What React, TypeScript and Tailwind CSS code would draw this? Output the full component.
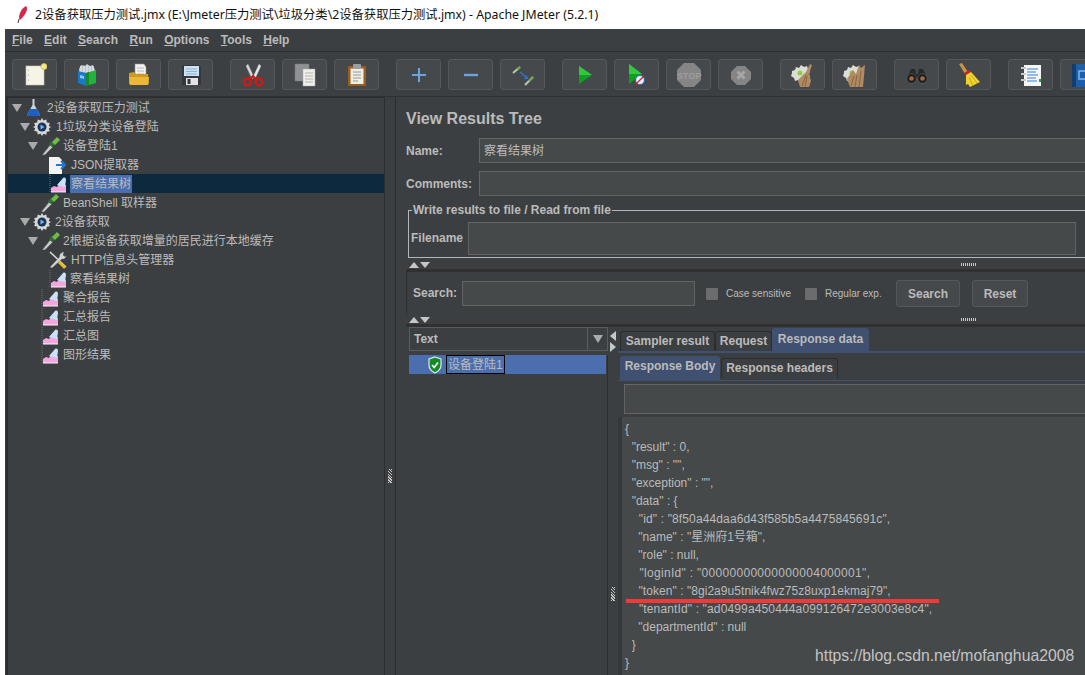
import React from "react";

const cjk = "font-['Liberation_Sans','Noto_Sans_CJK_SC',sans-serif]";

function Svg({ children, w = 24, h = 24, cls = "" }: { children: React.ReactNode; w?: number; h?: number; cls?: string }) {
  return (
    <svg width={w} height={h} viewBox={`0 0 ${w} ${h}`} className={`shrink-0 ${cls}`}>
      {children}
    </svg>
  );
}

const NewIcon = () => (
  <Svg>
    <rect x="3" y="3" width="18" height="19" fill="#f6f4e6" stroke="#c8c6b4" strokeWidth="0.6" />
    <circle cx="5.5" cy="7" r="0.6" fill="#999" />
    <circle cx="5.5" cy="12" r="0.6" fill="#999" />
    <circle cx="5.5" cy="17" r="0.6" fill="#999" />
    <circle cx="21" cy="3.5" r="3" fill="#f4e88a" stroke="#c9b94a" strokeWidth="0.8" />
  </Svg>
);
const TemplatesIcon = () => (
  <Svg>
    <path d="M4 6l2-4 4 1 2-2 3 2 3-1 2 5v4H4z" fill="#b9c4ca" />
    <path d="M6 3v6M9 2.500V9M12 2V9M15 3v6M18 3v6" stroke="#eef1f2" strokeWidth="1" />
    <path d="M3 8l8 2v13l-8-3z" fill="#1a78c8" />
    <path d="M11 10l10-3v13l-10 3z" fill="#22b33a" />
    <path d="M11 10l3-1v13l-3 1z" fill="#148a2a" />
    <path d="M5 12l4 1v3l-4-1z" fill="#8cc4ee" />
  </Svg>
);
const OpenIcon = () => (
  <Svg>
    <path d="M8 1h9l2 3v10H8z" fill="#f2f2ee" stroke="#9a9a90" strokeWidth="0.6" />
    <path d="M10 5h7M10 8h7M10 11h7" stroke="#aaa" strokeWidth="0.8" />
    <path d="M2 10l5-1 2 2h12l1 10H2z" fill="#d19a20" />
    <path d="M2 14h20l-1 8H3z" fill="#eab737" />
  </Svg>
);
const SaveIcon = () => (
  <Svg>
    <path d="M3 2h17l2 2v18H3z" fill="#34383c" />
    <rect x="5" y="3" width="15" height="10" fill="#cfe2f3" />
    <path d="M7 6h11M7 8.500h11M7 11h11" stroke="#7ba6d0" strokeWidth="0.8" />
    <rect x="7" y="15" width="12" height="7" fill="#e4e4e4" />
    <rect x="8.500" y="16" width="3" height="5" fill="#34383c" />
  </Svg>
);
const CutIcon = () => (
  <Svg>
    <path d="M7 1l6 13 -2 2L5 3z" fill="#d8dadc" stroke="#8d9092" strokeWidth="0.5" />
    <path d="M18 1l-6 13 2 2 6-13z" fill="#eceef0" stroke="#8d9092" strokeWidth="0.5" />
    <circle cx="6.500" cy="19" r="3.500" fill="none" stroke="#d01818" strokeWidth="2.500" />
    <circle cx="18" cy="19" r="3.500" fill="none" stroke="#d01818" strokeWidth="2.500" />
    <path d="M9 16l3-3 3 3" fill="none" stroke="#d01818" strokeWidth="2" />
  </Svg>
);
const CopyIcon = () => (
  <Svg>
    <rect x="2" y="1" width="14" height="17" fill="#8f9194" stroke="#777" strokeWidth="0.5" />
    <path d="M10 6h12v17H10z" fill="#eeeeea" stroke="#aaa" strokeWidth="0.5" />
    <path d="M12 10h8M12 13h8M12 16h8M12 19h8" stroke="#a5a5a5" strokeWidth="0.8" />
  </Svg>
);
const PasteIcon = () => (
  <Svg>
    <rect x="3" y="3" width="18" height="20" rx="1" fill="#9a5d1c" />
    <rect x="5.500" y="5.500" width="13" height="15.500" fill="#efefe6" />
    <rect x="8" y="1" width="8" height="5" rx="1" fill="#9aa0a4" />
    <path d="M8 9h8M8 12h8M8 15h8M8 18h5" stroke="#8e8e8e" strokeWidth="0.9" />
  </Svg>
);
const PlusIcon = () => (
  <Svg>
    <path d="M12 5v14M5 12h14" stroke="#6ba4e0" strokeWidth="2" />
  </Svg>
);
const MinusIcon = () => (
  <Svg>
    <path d="M5 12h14" stroke="#6ba4e0" strokeWidth="2.400" />
  </Svg>
);
const ToggleIcon = () => (
  <Svg>
    <path d="M2 10l7-6" stroke="#b4c4b0" strokeWidth="2.200" />
    <path d="M6.500 6.500L9 4" stroke="#6aaa4a" strokeWidth="2.200" />
    <path d="M14 22l8-8" stroke="#b4c4b0" strokeWidth="2.200" />
    <path d="M18 18l4-4" stroke="#6aaa4a" strokeWidth="2.200" />
    <path d="M9 9l6 5" stroke="#2c74d8" strokeWidth="1.500" />
    <path d="M13 16l4 0-1-4z" fill="#2c74d8" />
  </Svg>
);
const PlayIcon = () => (
  <Svg>
    <path d="M6 3l13 9-13 9z" fill="#10a020" />
    <path d="M6 3l13 9H6z" fill="#32c83e" />
  </Svg>
);
const PlayNoTimerIcon = () => (
  <Svg>
    <path d="M4 1l13 10L4 21z" fill="#10a020" />
    <path d="M4 1l13 10H4z" fill="#32c83e" />
    <circle cx="15" cy="17" r="4.500" fill="#e6eef8" stroke="#3466b8" strokeWidth="1.200" />
    <path d="M11 21l8-8" stroke="#d02020" strokeWidth="1.300" />
  </Svg>
);
const StopIcon = () => (
  <Svg w={26} h={26}>
    <path d="M8 1h10l7 7v10l-7 7H8l-7-7V8z" fill="#858585" />
    <text x="13" y="17" textAnchor="middle" fontSize="9" fontWeight="700" fill="#9d9d9d" fontFamily="Liberation Sans">STOP</text>
  </Svg>
);
const ShutIcon = () => (
  <Svg>
    <path d="M8 3h8l6 6v7l-6 6H8l-6-6V9z" fill="#858585" />
    <path d="M8.500 8.500l7 7M15.500 8.500l-7 7" stroke="#a8a8a8" strokeWidth="2.600" />
  </Svg>
);
const ClearIcon = ({ all }: { all?: boolean }) => (
  <Svg w={26} h={26}>
    <path d="M2 9l3-1 1-3 3 1 2-3 3 2 3-1 1 3 2 2-1 3 1 3-3 1-1 3-3-1-2 2-3-2-3 1-1-3-3-2 1-3z" fill="#dcdcd8" />
    <circle cx="10" cy="11" r="2.500" fill={all ? "#9ac13a" : "#8fcf40"} />
    <path d={all ? "M8 25l-3-8 6-9 3 4 3-9 2 3 4-3-2 22z" : "M10 25l-2-7 8-8 4-8 2 1-3 9 2 7-2 6z"} fill="#b08a60" />
    <path d={all ? "M9 24l3-10M13 25l2-12M17 25l2-16" : "M12 24l4-11M15 25l2-11"} stroke="#7d5e3c" strokeWidth="0.8" />
  </Svg>
);
const BinocIcon = () => (
  <Svg>
    <path d="M6 6h4l1 5h2l1-5h4l4 9H2z" fill="#26282a" />
    <circle cx="6.500" cy="15.500" r="4.800" fill="#1c1d1e" stroke="#6a6a6a" strokeWidth="0.6" />
    <circle cx="17.500" cy="15.500" r="4.800" fill="#1c1d1e" stroke="#6a6a6a" strokeWidth="0.6" />
    <circle cx="6.500" cy="15.500" r="2.300" fill="#a86a3c" />
    <circle cx="17.500" cy="15.500" r="2.300" fill="#a86a3c" />
  </Svg>
);
const BroomIcon = () => (
  <Svg w={26} h={26}>
    <path d="M3 2l3-1 6 9-3 2z" fill="#c89248" />
    <path d="M8 11l5-3 2 2-5 3z" fill="#d42020" />
    <path d="M10 13l5-3 9 10-10 5-2-3-2 1z" fill="#efd22c" />
    <path d="M13 15l4 9M15 13l6 8" stroke="#c4a214" strokeWidth="0.8" />
  </Svg>
);
const LogIcon = () => (
  <Svg>
    <rect x="5" y="2" width="17" height="21" fill="#f6f6f6" />
    <path d="M8 6h11M8 9h9M8 12h11M8 15h9M8 18h10" stroke="#2e7fe0" strokeWidth="1.100" />
    <path d="M2 5h5M2 11h5M2 17h5" stroke="#c8c8c8" strokeWidth="2.200" />
    <path d="M20 16h2v3h-2z" fill="#2fa03a" />
  </Svg>
);
const BookIcon = () => (
  <Svg>
    <rect x="1" y="1" width="22" height="23" fill="#1c5fa8" />
    <rect x="1" y="1" width="4" height="23" fill="#123d70" />
    <path d="M8 8h8v8H8z" fill="none" stroke="#7fb6ee" strokeWidth="1.500" />
  </Svg>
);

const Flask = () => (
  <Svg w={18} h={19}>
    <path d="M7.500 1h2v6l5 9a1.500 1.500 0 0 1-1.300 2H3.800a1.500 1.500 0 0 1-1.300-2l5-9z" fill="#c9d3dc" />
    <path d="M5 11h7l3 6-1 1H3l-1-1z" fill="#1f5fc4" />
  </Svg>
);
const GearPlay = () => (
  <Svg w={18} h={18}>
    <path d="M9 0l1.500 2.600 2.800-1 .5 3 3 .5-1 2.800L18 9l-2.200 1.500 1 2.800-3 .5-.5 3-2.800-1L9 18l-1.500-2.400-2.800 1-.5-3-3-.5 1-2.800L0 9l2.200-1.100-1-2.800 3-.5.5-3 2.800 1z" fill="#d5d7d8" />
    <circle cx="9" cy="9" r="4.500" fill="#1b3558" />
    <path d="M7.500 6.500l4 2.500-4 2.500z" fill="#7db4ea" />
  </Svg>
);
const Pipette = () => (
  <Svg w={19} h={18}>
    <path d="M1 18l8-10 3 2-8 8z" fill="#c4c8c8" stroke="#4a4a4a" strokeWidth="0.6" />
    <path d="M8 7l3-3 3 3-3 3z" fill="#2f6f32" />
    <path d="M11 5l5-5 3 3-5 5z" fill="#6fbb4a" />
  </Svg>
);
const JsonIcon = () => (
  <Svg w={19} h={18}>
    <path d="M1 1h10l3 3v14H1z" fill="#f4f4f4" />
    <path d="M8 9h8M13 5l4 4-4 4" fill="none" stroke="#1f78d8" strokeWidth="2" />
  </Svg>
);
const Graph = () => (
  <Svg w={18} h={19}>
    <path d="M1 1v17" stroke="#6f7275" strokeWidth="1" strokeDasharray="1 1" />
    <path d="M2 14l3-2 3 1 2-3 7 1v7H2z" fill="#f3a6e0" />
    <path d="M8 11l6-7c2-1 3 0 3 2l-1 7z" fill="#c9e2f8" />
    <path d="M2 18h15" stroke="#f5f5f5" strokeWidth="1" />
  </Svg>
);
const Tools = () => (
  <Svg w={19} h={18}>
    <path d="M2 1l16 15" stroke="#e2e2e2" strokeWidth="1.400" />
    <path d="M9 9l8 8" stroke="#e8b81c" strokeWidth="2.600" />
    <path d="M16 1l-1 3 1.500 1.500L18 4.500c0 3-2.500 4-4 3.500L4 17l-2-1 9.500-10c-.5-2 1.500-5 4.500-5z" fill="#d4d6d6" stroke="#555" strokeWidth="0.4" />
  </Svg>
);
const Shield = () => (
  <Svg w={16} h={18}>
    <path d="M8 1l6 2v6c0 4-3 6.500-6 8-3-1.500-6-4-6-8V3z" fill="#108c28" stroke="#e6e6e6" strokeWidth="1.200" />
    <path d="M5 9l2.200 2.400L11 6.500" fill="none" stroke="#fff" strokeWidth="1.600" />
  </Svg>
);

const Arrow = () => <span className="h-0 w-0 border-x-[5px] border-t-[8px] border-x-transparent border-t-[#a8aaac]" />;

const groups: React.ReactNode[][] = [
  [<NewIcon />, <TemplatesIcon />, <OpenIcon />, <SaveIcon />],
  [<CutIcon />, <CopyIcon />, <PasteIcon />],
  [<PlusIcon />, <MinusIcon />, <ToggleIcon />],
  [<PlayIcon />, <PlayNoTimerIcon />, <StopIcon />, <ShutIcon />],
  [<ClearIcon />, <ClearIcon all />],
  [<BinocIcon />, <BroomIcon />],
  [<LogIcon />, <BookIcon />],
];

const menus = ["File", "Edit", "Search", "Run", "Options", "Tools", "Help"];

type Row = { text: string; pad: string; arrow?: boolean; icon: React.ReactNode; sel?: boolean; gap: string };
const rows: Row[] = [
  { text: "2设备获取压力测试", pad: "pl-[4px]", arrow: true, icon: <Flask />, gap: "ml-[4px]" },
  { text: "1垃圾分类设备登陆", pad: "pl-[12px]", arrow: true, icon: <GearPlay />, gap: "ml-[5px]" },
  { text: "设备登陆1", pad: "pl-[20px]", arrow: true, icon: <Pipette />, gap: "ml-[3px]" },
  { text: "JSON提取器", pad: "pl-[40px]", icon: <JsonIcon />, gap: "ml-[4px]" },
  { text: "察看结果树", pad: "pl-[41px]", icon: <Graph />, sel: true, gap: "ml-[3px]" },
  { text: "BeanShell 取样器", pad: "pl-[32px]", icon: <Pipette />, gap: "ml-[4px]" },
  { text: "2设备获取", pad: "pl-[12px]", arrow: true, icon: <GearPlay />, gap: "ml-[4px]" },
  { text: "2根据设备获取增量的居民进行本地缓存", pad: "pl-[20px]", arrow: true, icon: <Pipette />, gap: "ml-[3px]" },
  { text: "HTTP信息头管理器", pad: "pl-[40px]", icon: <Tools />, gap: "ml-[4px]" },
  { text: "察看结果树", pad: "pl-[41px]", icon: <Graph />, gap: "ml-[3px]" },
  { text: "聚合报告", pad: "pl-[33px]", icon: <Graph />, gap: "ml-[4px]" },
  { text: "汇总报告", pad: "pl-[33px]", icon: <Graph />, gap: "ml-[4px]" },
  { text: "汇总图", pad: "pl-[33px]", icon: <Graph />, gap: "ml-[4px]" },
  { text: "图形结果", pad: "pl-[33px]", icon: <Graph />, gap: "ml-[4px]" },
];

const json: [string, string][] = [
  ["{", ""],
  ['  "result" : 0,', ""],
  ['  "msg" : "",', ""],
  ['  "exception" : "",', ""],
  ['  "data" : {', ""],
  ['    "id" : "8f50a44daa6d43f585b5a4475845691c",', "tracking-[0.13px]"],
  ['    "name" : "星洲府1号箱",', ""],
  ['    "role" : null,', ""],
  ['    "loginId" : "00000000000000004000001",', "tracking-[0.3px]"],
  ['    "token" : "8gi2a9u5tnik4fwz75z8uxp1ekmaj79",', "tracking-[0.05px]"],
  ['    "tenantId" : "ad0499a450444a099126472e3003e8c4",', "tracking-[0.14px]"],
  ['    "departmentId" : null', ""],
  ["  }", ""],
  ["}", ""],
];

const Field = ({ label, value }: { label: string; value?: string }) => (
  <div className="flex h-[25px] items-center">
    <span className="w-[73px] text-[12px] font-bold">{label}</span>
    <div className="flex h-full flex-1 items-center border border-[#646464] bg-[#45494a] px-[4px] text-[12px]">{value}</div>
  </div>
);

const Splitter = () => (
  <div className="flex h-[9px] items-center justify-between pl-[13px] pr-[119px]">
    <div className="flex gap-[1px]">
      <span className="h-0 w-0 border-x-[5.500px] border-b-[6px] border-x-transparent border-b-[#c4c6c8]" />
      <span className="h-0 w-0 border-x-[5.500px] border-t-[6px] border-x-transparent border-t-[#c4c6c8]" />
    </div>
    <span className="h-[3px] w-[15px] bg-[repeating-linear-gradient(90deg,#c8c8c8_0,#c8c8c8_1px,#3c3f41_1px,#3c3f41_2px)]" />
  </div>
);

const Check = ({ label, w }: { label: string; w: string }) => (
  <div className={`flex items-center ${w}`}>
    <span className="h-[14px] w-[14px] rounded-[2px] border border-[#3a3c3e] bg-[#6a6c6e]" />
    <span className="ml-[7px] text-[10px]">{label}</span>
  </div>
);

const Grip = () => (
  <span className="block h-[14px] w-[4px] bg-[repeating-linear-gradient(45deg,#c8c8c8_0,#c8c8c8_1px,#3c3f41_1px,#3c3f41_2px)]" />
);

export default function App() {
  return (
    <div className={`relative flex h-[675px] w-[1085px] flex-col overflow-hidden bg-white text-[#bbbbbb] ${cjk}`}>
      {/* title bar */}
      <div className="flex h-[29px] shrink-0 items-center bg-white pl-[16px] pt-[1px] text-[12.300px] text-[#111] font-['Noto_Sans','Noto_Sans_CJK_SC',sans-serif]">
        <Svg w={12} h={18}>
          <path d="M10 0c2 2 1 6-3 11L4 14 3 12C3 7 6 2 10 0z" fill="#d8284a" />
          <path d="M3 13l-1 4" stroke="#333" strokeWidth="1" />
        </Svg>
        <span className="ml-[7px] whitespace-pre">2设备获取压力测试.jmx (E:\Jmeter压力测试\垃圾分类\2设备获取压力测试.jmx) - Apache JMeter (5.2.1)</span>
      </div>

      <div className="flex min-h-0 flex-1 pl-[5px]">
        <div className="flex min-w-0 flex-1 flex-col bg-[#3c3f41]">
          {/* menu */}
          <div className="flex h-[23px] shrink-0 items-center gap-[11.350px] border-b border-[#2e3032] pl-[7px] text-[12px] font-bold">
            {menus.map((m) => (
              <span key={m}>
                <span className="underline">{m[0]}</span>
                {m.slice(1)}
              </span>
            ))}
          </div>
          {/* toolbar */}
          <div className="flex h-[45px] shrink-0 gap-[17px] overflow-hidden border-b border-[#2e3032] pl-[7px] pt-[7px]">
            {groups.map((g, i) => (
              <div key={i} className="flex shrink-0 gap-[7px]">
                {g.map((icon, j) => (
                  <div key={j} className="flex h-[31px] w-[45px] items-center justify-center rounded-[3px] border border-[#55585a] bg-[#46494b]">
                    {icon}
                  </div>
                ))}
              </div>
            ))}
          </div>

          <div className="flex min-h-0 flex-1">
            {/* tree */}
            <div className="ml-[1px] w-[379px] shrink-0 border-l-2 border-r border-t border-[#2b2d2f]">
              {rows.map((r) => (
                <div key={r.text + r.pad} className={`flex h-[19px] items-center text-[12px] ${r.pad} ${r.sel ? "bg-[#0d293e]" : ""}`}>
                  {r.arrow && (
                    <span className="mr-[3px] flex w-[10px] justify-center">
                      <Arrow />
                    </span>
                  )}
                  {r.icon}
                  <span className={`${r.gap} whitespace-pre ${r.sel ? "bg-[#4b6eaf] px-[1px]" : ""}`}>{r.text}</span>
                </div>
              ))}
            </div>
            {/* divider */}
            <div className="flex w-[10px] shrink-0 items-center justify-center pt-[180px]">
              <Grip />
            </div>
            {/* right panel */}
            <div className="flex w-[700px] shrink-0 flex-col border-l border-[#2b2d2f] pl-[10px]">
              <h1 className="mt-[12px] h-[20px] text-[16px] font-bold leading-[20px]">View Results Tree</h1>
              <div className="mt-[9px] flex flex-col gap-[8px]">
                <Field label="Name:" value="察看结果树" />
                <Field label="Comments:" />
              </div>
              <fieldset className="ml-[2px] mt-[7px] h-[55px] shrink-0 border-b border-l border-t border-[#b4b6b8] pl-[2px] pr-[19px]">
                <legend className="ml-[1px] px-[1px] text-[12px] font-bold leading-[14px]">Write results to file / Read from file</legend>
                <div className="mt-[5px] flex h-[33px] items-center">
                  <span className="-mt-[2px] w-[57px] text-[12px] font-bold">Filename</span>
                  <div className="h-full flex-1 border border-[#646464] bg-[#45494a]" />
                </div>
              </fieldset>
              <div className="-ml-[10px] mt-[2px]">
                <Splitter />
              </div>
              <div className="flex h-[46px] shrink-0 flex-col justify-start border-l border-t-[3px] border-[#2e3032] pl-[6px] pt-[8px]">
                <div className="flex h-[27px] items-center">
                  <span className="-mt-[2px] w-[49px] text-[12px] font-bold">Search:</span>
                  <div className="h-[25px] w-[233px] border border-[#646464] bg-[#45494a]" />
                  <div className="ml-[10px] flex">
                    <Check label="Case sensitive" w="w-[99px]" />
                    <Check label="Regular exp." w="w-[92px]" />
                  </div>
                  <div className="flex h-[27px] w-[64px] items-center justify-center rounded-[3px] border border-[#55585a] bg-[#46494b] text-[12px] font-bold">Search</div>
                  <div className="ml-[12px] flex h-[27px] w-[56px] items-center justify-center rounded-[3px] border border-[#55585a] bg-[#46494b] text-[12px] font-bold">Reset</div>
                </div>
              </div>
              <div className="-ml-[10px]">
                <Splitter />
              </div>
              {/* bottom split */}
              <div className="flex min-h-0 flex-1 border-t-[3px] border-[#2e3032] pl-[3px]">
                {/* list */}
                <div className="flex w-[199px] shrink-0 flex-col">
                  <div className="flex h-[24px] border border-[#5a5d5f]">
                    <span className="flex flex-1 items-center pl-[4px] text-[12px] font-bold">Text</span>
                    <span className="flex w-[20px] items-center justify-center border-l border-[#5a5d5f]">
                      <Arrow />
                    </span>
                  </div>
                  <div className="mt-[4px] flex-1 border-r border-[#2b2d2f] pr-[1px]">
                    <div className="flex h-[19px] items-center bg-[#4b6eaf] pl-[18px]">
                      <Shield />
                      <span className="ml-[3px] flex h-[19px] items-center border border-black px-[1px] text-[12px]">设备登陆1</span>
                    </div>
                  </div>
                </div>
                {/* divider */}
                <div className="flex w-[10px] shrink-0 flex-col items-center">
                  <span className="mt-[4px] h-0 w-0 border-y-[5px] border-r-[6px] border-y-transparent border-r-[#c4c6c8]" />
                  <span className="mt-[1px] h-0 w-0 border-y-[5px] border-l-[6px] border-y-transparent border-l-[#c4c6c8]" />
                  <span className="mt-[235px]">
                    <Grip />
                  </span>
                </div>
                {/* tabs */}
                <div className="flex min-w-0 flex-1 flex-col">
                  <div className="flex h-[24px] shrink-0 items-end pl-[2px] text-[12px] font-bold">
                    <span className="flex h-[20px] w-[95px] items-center justify-center rounded-t-[3px] border border-b-0 border-[#2b2d2f] pb-[1px]">Sampler result</span>
                    <span className="flex h-[20px] w-[57px] items-center justify-center rounded-t-[3px] border border-b-0 border-[#2b2d2f] pb-[1px]">Request</span>
                    <span className="flex h-[23px] w-[97px] items-start justify-center rounded-t-[3px] bg-[#3f5070] pt-[2px]">Response data</span>
                  </div>
                  <div className="h-[2px] shrink-0 bg-[#3f5070]" />
                  <div className="mt-[3px] flex h-[24px] shrink-0 items-end pl-[2px] text-[12px] font-bold">
                    <span className="flex h-[24px] w-[100px] items-start justify-center rounded-t-[3px] bg-[#3f5070] pt-[1px]">Response Body</span>
                    <span className="mb-[2px] ml-[1px] flex h-[20px] w-[117px] items-center justify-center rounded-t-[3px] border border-b-0 border-[#2b2d2f] pb-[1px]">Response headers</span>
                  </div>
                  <div className="h-[1px] shrink-0 bg-[#3f5070]" />
                  <div className="ml-[6px] mt-[3px] h-[30px] shrink-0 border border-[#646464] bg-[#45494a]" />
                  <div className="mt-[3px] flex-1 border-l-[4px] border-[#35383a] bg-[#45494a] pl-[3px] pt-[3px]">
                    {json.map(([line, track], i) => (
                      <div key={i} className={`h-[18px] w-fit whitespace-pre text-[12px] leading-[18px] ${track}`}>
                        {line}
                      </div>
                    ))}
                  </div>
                </div>
              </div>
            </div>
          </div>
        </div>
      </div>

      {/* annotation and watermark painted over the image */}
      <div className="absolute left-[626px] top-[599px] h-[4px] w-[313px] bg-[#f03a3a]" />
      <div className="absolute left-[815px] top-[646px] font-['Liberation_Sans',sans-serif] text-[15.750px] leading-[20px] text-[#c4c4c4]">
        https://blog.csdn.net/mofanghua2008
      </div>
    </div>
  );
}
